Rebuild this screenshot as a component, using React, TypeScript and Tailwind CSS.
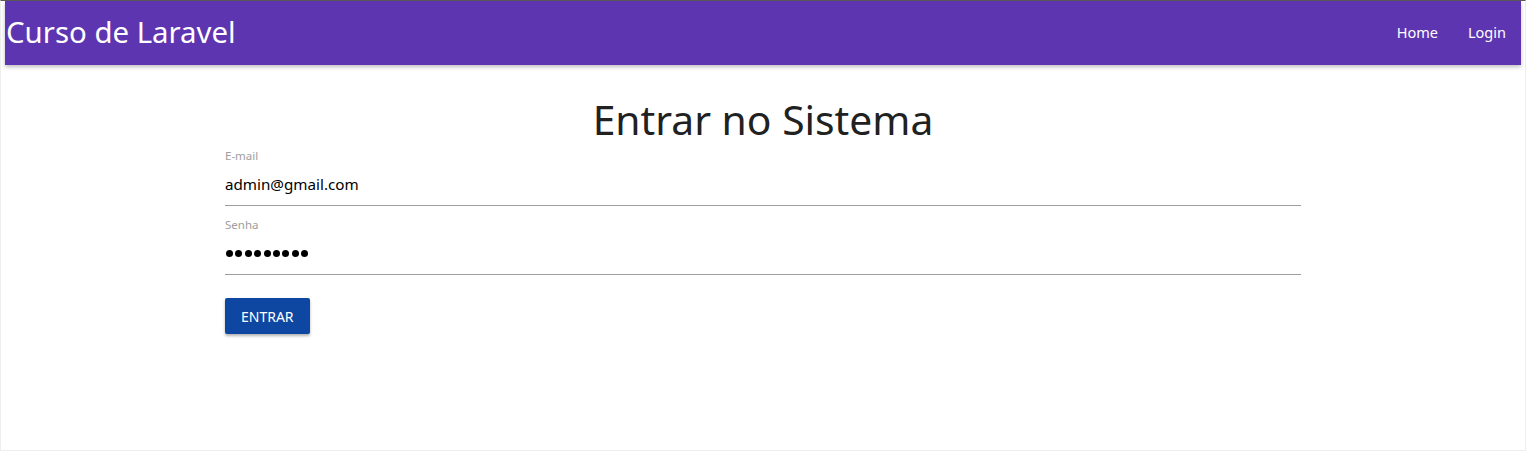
const font = { fontFamily: '"Noto Sans", "Open Sans", sans-serif' };

const NavBar = () => (
  <nav className="flex h-16 items-center justify-between bg-[#5e35b1] text-white shadow-[0_2px_4px_rgba(0,0,0,0.25)]">
    <a className="pl-[1px] text-[29.4px] leading-none">Curso de Laravel</a>
    <ul className="flex h-full items-center">
      <li className="px-[15px] text-[14.5px]">Home</li>
      <li className="px-[15px] text-[14.5px]">Login</li>
    </ul>
  </nav>
);

const Field = ({ label, children }: { label: string; children: React.ReactNode }) => (
  <div>
    <label className="block text-[11.5px] leading-[14px] text-[#9e9e9e]">{label}</label>
    <div className="flex h-[43px] items-center border-b border-[#9e9e9e] text-[15.2px] text-black">
      {children}
    </div>
  </div>
);

export default function App() {
  return (
    <div
      className="min-h-[451px] border-t border-x border-b border-t-[#5a5a5a] border-x-[#eeeeee] border-b-[#eeeeee] bg-white px-1"
      style={font}
    >
      <NavBar />
      <main className="mx-auto w-[1076px]">
        <h1 className="mt-[26px] text-center text-[40.8px] leading-[56px] text-[#212121]">
          Entrar no Sistema
        </h1>
        <div className="mt-[2px] flex flex-col gap-[12px]">
          <Field label="E-mail">admin@gmail.com</Field>
          <Field label="Senha">
            <span className="flex gap-[2.4px] pl-[1px] pt-[1px]" aria-label="password">
              {Array.from({ length: 9 }).map((_, i) => (
                <span key={i} className="h-[7px] w-[7px] rounded-full bg-black" />
              ))}
            </span>
          </Field>
        </div>
        <button className="mt-[23px] h-9 rounded-[2px] bg-[#0d47a1] px-4 text-[14px] text-white shadow-[0_2px_3px_rgba(0,0,0,0.3)]">
          ENTRAR
        </button>
      </main>
    </div>
  );
}
